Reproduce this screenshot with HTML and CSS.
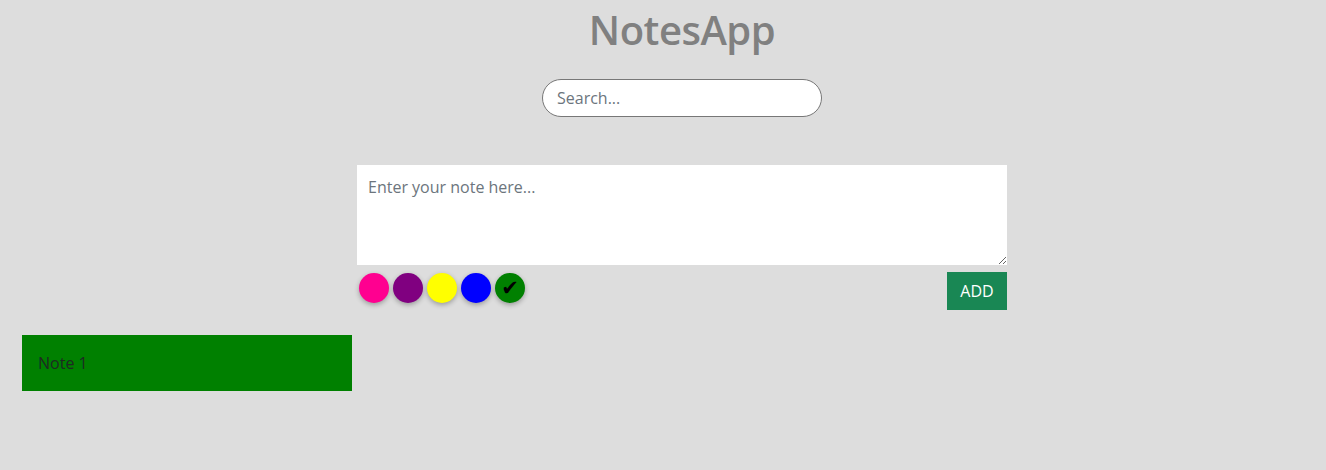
FILE: index.html
```html
<!DOCTYPE html>
<html>
<head>
<meta charset="utf-8">
<link rel="stylesheet" href="styles.css">
</head>
<body>
<div class="app">
  <header class="header">
    <h1 class="title">NotesApp</h1>
    <input class="search" type="text" placeholder="Search...">
  </header>
  <section class="composer">
    <textarea class="note-input" placeholder="Enter your note here..."></textarea>
    <div class="composer-bar">
      <div class="swatches">
        <span class="swatch pink"></span>
        <span class="swatch purple"></span>
        <span class="swatch yellow"></span>
        <span class="swatch blue"></span>
        <span class="swatch green selected">✔</span>
      </div>
      <button class="add-btn">ADD</button>
    </div>
  </section>
  <section class="notes">
    <div class="note green-bg">Note 1</div>
  </section>
</div>
</body>
</html>
```
FILE: styles.css
```css
* { box-sizing: border-box; }
html, body { margin: 0; padding: 0; }
body {
  background: #dddddd;
  font-family: "Open Sans", "DejaVu Sans", sans-serif;
  color: #212529;
  width: 1326px;
  height: 470px;
  overflow: hidden;
}
.app { display: flex; flex-direction: column; }
.header {
  display: flex;
  flex-direction: column;
  align-items: center;
  padding-left: 38px;
}
.title {
  margin: 6px 0 0;
  font-size: 40px;
  font-weight: 600;
  line-height: 48px;
  color: #808080;
  letter-spacing: -0.5px;
}
.search {
  margin-top: 25px;
  width: 280px;
  height: 38px;
  border: 1px solid #777;
  border-radius: 19px;
  padding: 0 14px;
  font-family: inherit;
  font-size: 16px;
  background: #fff;
  outline: none;
}
.search::placeholder { color: #6c757d; }
.composer {
  margin: 48px auto 0;
  width: 650px;
  position: relative;
  left: 19px;
  display: flex;
  flex-direction: column;
}
.note-input {
  width: 650px;
  height: 100px;
  border: none;
  padding: 11px 11px;
  font-family: inherit;
  font-size: 16px;
  resize: vertical;
  display: block;
  background: #fff;
  outline: none;
}
.note-input::placeholder { color: #6c757d; }
.composer-bar {
  display: flex;
  justify-content: space-between;
  align-items: flex-start;
  margin-top: 7px;
}
.swatches { display: flex; gap: 4px; padding-left: 2px; padding-top: 1px; }
.swatch {
  width: 30px;
  height: 30px;
  border-radius: 50%;
  box-shadow: 0 2px 5px rgba(0,0,0,0.3);
  display: flex;
  align-items: center;
  justify-content: center;
  font-size: 21px;
  line-height: 1;
  font-family: "DejaVu Sans", sans-serif;
  color: #000;
}
.pink { background: #ff0090; }
.purple { background: #800080; }
.yellow { background: #ffff00; }
.blue { background: #0000ff; }
.green { background: #008000; }
.add-btn {
  width: 60px;
  height: 38px;
  background: #198754;
  color: #fff;
  border: none;
  font-family: inherit;
  font-size: 16px;
  padding: 0;
}
.notes {
  display: flex;
  padding: 25px 22px 0;
}
.note {
  width: 330px;
  height: 56px;
  padding: 0 16px;
  display: flex;
  align-items: center;
  font-size: 16px;
  color: #1e2a22;
}
.green-bg { background: #008000; }
```
